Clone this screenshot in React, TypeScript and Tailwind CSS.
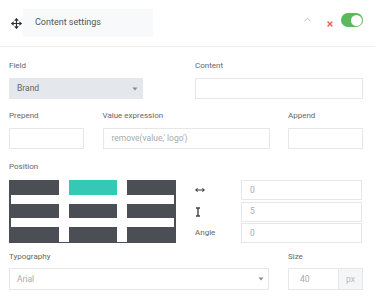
import { ChevronUp, Move, X } from "lucide-react"

const labelStyle = "block text-[8px] leading-[12px] text-[#666]"
const inputStyle = "flex items-center border border-[#e7e7e7] bg-white px-[8px] text-[8.5px] text-[#aaa]"

const Caret = () => (
	<svg width="6" height="4" viewBox="0 0 6 4" className="shrink-0">
		<path d="M0.5 0.5 L5.5 0.5 L3 3.5 Z" fill="#8a8a8a" />
	</svg>
)

const HArrow = () => (
	<svg width="10" height="6" viewBox="0 0 10 6">
		<path d="M1 3 H9" stroke="#444" strokeWidth="1.1" />
		<path d="M2.6 1.4 L0.8 3 L2.6 4.6 M7.4 1.4 L9.2 3 L7.4 4.6" stroke="#444" strokeWidth="1.1" fill="none" />
	</svg>
)

const VArrow = () => (
	<svg width="6" height="10" viewBox="0 0 6 10">
		<path d="M3 1 V9" stroke="#444" strokeWidth="1.4" />
		<path d="M1 1 H5 M1 9 H5" stroke="#444" strokeWidth="1.4" />
	</svg>
)

const PositionGrid = () => (
	<svg width="167" height="63" viewBox="0 0 167 63" className="shrink-0">
		<rect x="0" y="0" width="167" height="63" fill="#4b4e55" />
		<rect x="60" y="0" width="48" height="15" fill="#35c9b5" />
		<rect x="2" y="15" width="163" height="9" fill="#fff" />
		<rect x="2" y="38" width="163" height="9" fill="#fff" />
		<rect x="50" y="0" width="10" height="62" fill="#fff" />
		<rect x="108" y="0" width="10" height="62" fill="#fff" />
	</svg>
)

const OffsetRow = ({ icon, value }: { icon: React.ReactNode, value: string }) => (
	<div className="flex items-center">
		<div className="w-[46px] flex items-center">{icon}</div>
		<div className={`${inputStyle} h-[20px] w-[121px]`}>{value}</div>
	</div>
)

const App = () => {
	return (
		<div className="w-[375px] h-[297px] bg-white overflow-hidden font-['Roboto',sans-serif]">
			{/* header */}
			<div className="h-[47px] border-b border-[#efefef] flex items-center pl-[11px] pr-[12px]">
				<Move size={11} strokeWidth={2.6} className="text-[#333] shrink-0" />
				<div className="ml-[1px] w-[130px] h-[28px] bg-[#f8f9fb] flex items-center pl-[12px] text-[9px] text-[#555]">
					Content settings
				</div>
				<div className="ml-auto mb-[8px]">
					<ChevronUp size={11} strokeWidth={2} className="text-[#aab3bf]" />
				</div>
				<div className="ml-[13px] mt-[1px]">
					<X size={8} strokeWidth={4} className="text-[#f15a5a]" />
				</div>
				<div className="ml-[7px] mb-[6px] w-[22px] h-[14px] rounded-full bg-[#5cb85c] flex items-center justify-end pr-[1.5px]">
					<div className="w-[11px] h-[11px] rounded-full bg-white" />
				</div>
			</div>

			<div className="pl-[9px] pr-[12px]">
				{/* field / content */}
				<div className="mt-[13px] flex justify-between">
					<div className="w-[134px]">
						<span className={labelStyle}>Field</span>
						<div className="mt-[6px] h-[21px] bg-[#e4e7eb] flex items-center justify-between pl-[8px] pr-[5px] text-[8.5px] text-[#666]">
							<span>Brand</span>
							<Caret />
						</div>
					</div>
					<div className="w-[168px]">
						<span className={labelStyle}>Content</span>
						<div className={`${inputStyle} mt-[6px] h-[21px]`} />
					</div>
				</div>

				{/* prepend / expression / append */}
				<div className="mt-[11px] flex justify-between">
					<div className="w-[75px]">
						<span className={labelStyle}>Prepend</span>
						<div className={`${inputStyle} mt-[6px] h-[21px]`} />
					</div>
					<div className="w-[167px]">
						<span className={labelStyle}>Value expression</span>
						<div className={`${inputStyle} mt-[6px] h-[21px]`}>remove(value,' logo')</div>
					</div>
					<div className="w-[75px]">
						<span className={labelStyle}>Append</span>
						<div className={`${inputStyle} mt-[6px] h-[21px]`} />
					</div>
				</div>

				{/* position */}
				<div className="mt-[12px]">
					<span className={labelStyle}>Position</span>
					<div className="mt-[7px] flex">
						<PositionGrid />
						<div className="ml-[19px] flex flex-col gap-[1.5px]">
							<OffsetRow icon={<HArrow />} value="0" />
							<OffsetRow icon={<VArrow />} value="5" />
							<OffsetRow icon={<span className="text-[8px] text-[#666]">Angle</span>} value="0" />
						</div>
					</div>
				</div>

				{/* typography / size */}
				<div className="mt-[8px] flex justify-between">
					<div className="w-[260px]">
						<span className={labelStyle}>Typography</span>
						<div className={`${inputStyle} mt-[5px] h-[22px] justify-between pl-[7px] pr-[4px]`}>
							<span>Arial</span>
							<Caret />
						</div>
					</div>
					<div className="w-[75px]">
						<span className={labelStyle}>Size</span>
						<div className="mt-[5px] h-[22px] flex border border-[#e7e7e7] text-[8.5px]">
							<div className="flex-1 flex items-center pl-[11px] text-[#aaa]">40</div>
							<div className="w-[24px] flex items-center justify-center border-l border-[#e7e7e7] bg-[#f5f6f8] text-[#bbb]">px</div>
						</div>
					</div>
				</div>
			</div>
		</div>
	)
}

export default App
